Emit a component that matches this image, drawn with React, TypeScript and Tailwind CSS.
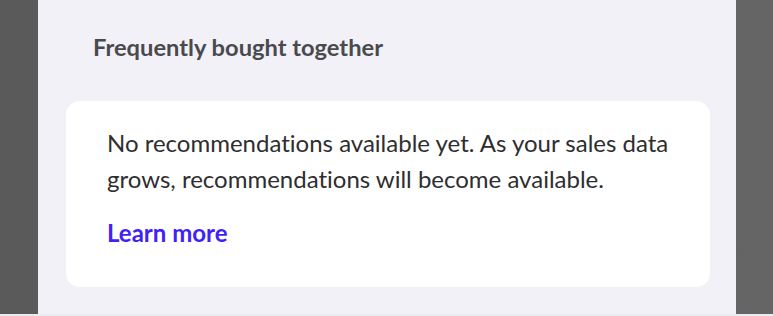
import React from 'react';

const App: React.FC = () => {
    return (
        <div className="flex h-[316px] w-[773px] flex-col bg-[#ececf0]" style={{ fontFamily: 'Lato, "Noto Sans", sans-serif' }}>
            <div className="flex h-[314px] bg-gradient-to-r from-[#595959] via-[#5f5f5f] to-[#656565]">
                <div className="ml-[38px] flex h-full w-[698px] flex-col bg-[#f1f1f7] pl-[28px] pr-[26px] pt-[33px] [font-variant-ligatures:none]">
                    <h2 className="pl-[27px] text-[23.7px] font-bold leading-[28px] text-[#4a4a4e]">Frequently bought together</h2>
                    <div className="mt-[40px] rounded-[14px] bg-white pl-[41px] pr-[36px] pt-[24px] pb-[40px]">
                        <p className="text-[24px] leading-[36px] text-[#2e2e30]">
                            No recommendations available yet. As your sales data grows, recommendations will become available.
                        </p>
                        <a href="#" className="mt-[22px] block text-[24px] font-bold leading-[28px] text-[#3f22f6]">Learn more</a>
                    </div>
                </div>
            </div>
        </div>
    );
};

export default App;
